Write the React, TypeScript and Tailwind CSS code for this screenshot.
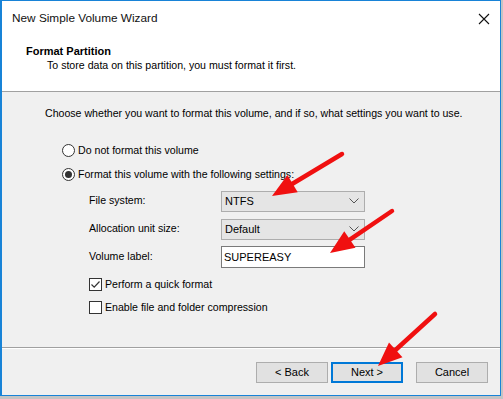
import React from "react"

const ui = { fontFamily: '"Liberation Sans", Arial, sans-serif' }

function Radio({ checked }: { checked?: boolean }) {
  return (
    <span className="flex size-[13px] items-center justify-center rounded-full border border-[#333] bg-white">
      {checked && <span className="size-[7px] rounded-full bg-[#333]" />}
    </span>
  )
}

function Check({ checked }: { checked?: boolean }) {
  return (
    <span className="flex size-[13px] items-center justify-center border border-[#333] bg-white">
      {checked && (
        <svg width="11" height="11" viewBox="0 0 11 11">
          <path d="M1.5 5.5 L4.2 8.2 L9.5 2.5" fill="none" stroke="#333" strokeWidth="1.2" />
        </svg>
      )}
    </span>
  )
}

function Select({ value }: { value: string }) {
  return (
    <div className="flex h-[21px] w-[144px] items-center justify-between border border-[#adadad] bg-[#e5e5e5] pl-[3px] pr-[5px] text-[11px]">
      <span>{value}</span>
      <svg width="10" height="6" viewBox="0 0 10 6">
        <path d="M0.5 0.5 L5 5 L9.5 0.5" fill="none" stroke="#555" strokeWidth="1" />
      </svg>
    </div>
  )
}

function Arrow({ x1, y1, x2, y2 }: { x1: number; y1: number; x2: number; y2: number }) {
  const dx = x2 - x1
  const dy = y2 - y1
  const len = Math.hypot(dx, dy)
  const ux = dx / len
  const uy = dy / len
  const hl = 24
  const hw = 10
  const bx = x2 - ux * hl
  const by = y2 - uy * hl
  const pts = `${x2},${y2} ${bx - uy * hw},${by + ux * hw} ${bx + uy * hw},${by - ux * hw}`
  return (
    <g>
      <line x1={x1} y1={y1} x2={bx + ux * 4} y2={by + uy * 4} stroke="#f01010" strokeWidth="4.5" strokeLinecap="round" />
      <polygon points={pts} fill="#f01010" />
    </g>
  )
}

function Button({ children, primary }: { children: React.ReactNode; primary?: boolean }) {
  return (
    <div
      className={
        "flex h-[21px] w-[72px] items-center justify-center bg-[#e1e1e1] text-[11px] " +
        (primary ? "border-2 border-[#0078d7]" : "border border-[#adadad]")
      }
    >
      {children}
    </div>
  )
}

export default function App() {
  return (
    <div className="relative h-[399px] w-[503px] bg-[#c4c4c4] text-[10.6px] text-black" style={ui}>
      <div className="flex h-[396px] w-[501px] flex-col border border-l-2 border-[#1883d7] bg-[#f0f0f0]">
        {/* Header */}
        <div className="h-[91px] border-b border-[#a0a0a0] bg-white">
          <div className="flex h-[36px] items-center justify-between pl-[10px] pr-[10px]">
            <span className="text-[11.8px] text-[#111]">New Simple Volume Wizard</span>
            <svg width="12" height="12" viewBox="0 0 12 12">
              <path d="M1 1 L11 11 M11 1 L1 11" stroke="#111" strokeWidth="1.1" />
            </svg>
          </div>
          <div className="pl-[24px] pt-[7px] text-[11px] font-bold leading-[14px]">Format Partition</div>
          <div className="pl-[45px] leading-[14px]">To store data on this partition, you must format it first.</div>
        </div>

        {/* Body */}
        <div className="flex flex-1 flex-col border-b border-[#a0a0a0] pl-[43px]">
          <div className="mt-[14px] leading-[14px]">
            Choose whether you want to format this volume, and if so, what settings you want to use.
          </div>
          <div className="mt-[23px] ml-[17px] flex items-center gap-[3px]">
            <Radio />
            <span>Do not format this volume</span>
          </div>
          <div className="mt-[8px] ml-[17px] flex items-center gap-[3px]">
            <Radio checked />
            <span>Format this volume with the following settings:</span>
          </div>
          <div className="ml-[44px] mt-[8px] flex flex-col gap-[7px]">
            <div className="flex items-center">
              <span className="w-[132px]">File system:</span>
              <Select value="NTFS" />
            </div>
            <div className="flex items-center">
              <span className="w-[132px]">Allocation unit size:</span>
              <Select value="Default" />
            </div>
            <div className="-mt-[1px] flex items-center">
              <span className="w-[132px]">Volume label:</span>
              <div className="flex h-[22px] w-[144px] items-center border border-[#7a7a7a] bg-white pl-[2px] text-[11px]">
                SUPEREASY
              </div>
            </div>
          </div>
          <div className="ml-[44px] mt-[9px] flex items-center gap-[3px]">
            <Check checked />
            <span>Perform a quick format</span>
          </div>
          <div className="ml-[44px] mt-[7px] flex items-center gap-[3px]">
            <Check />
            <span>Enable file and folder compression</span>
          </div>
        </div>

        {/* Footer */}
        <div className="flex h-[47px] items-start border-t border-white pt-[13px] pl-[254px]">
          <Button>&lt; Back</Button>
          <div className="ml-[3px]">
            <Button primary>Next &gt;</Button>
          </div>
          <div className="ml-[13px]">
            <Button>Cancel</Button>
          </div>
        </div>
      </div>

      <svg className="pointer-events-none absolute inset-0" width="503" height="399">
        <Arrow x1={342} y1={154} x2={272} y2={196} />
        <Arrow x1={392} y1={211} x2={330} y2={253} />
        <Arrow x1={435} y1={314} x2={378} y2={366} />
      </svg>
    </div>
  )
}
